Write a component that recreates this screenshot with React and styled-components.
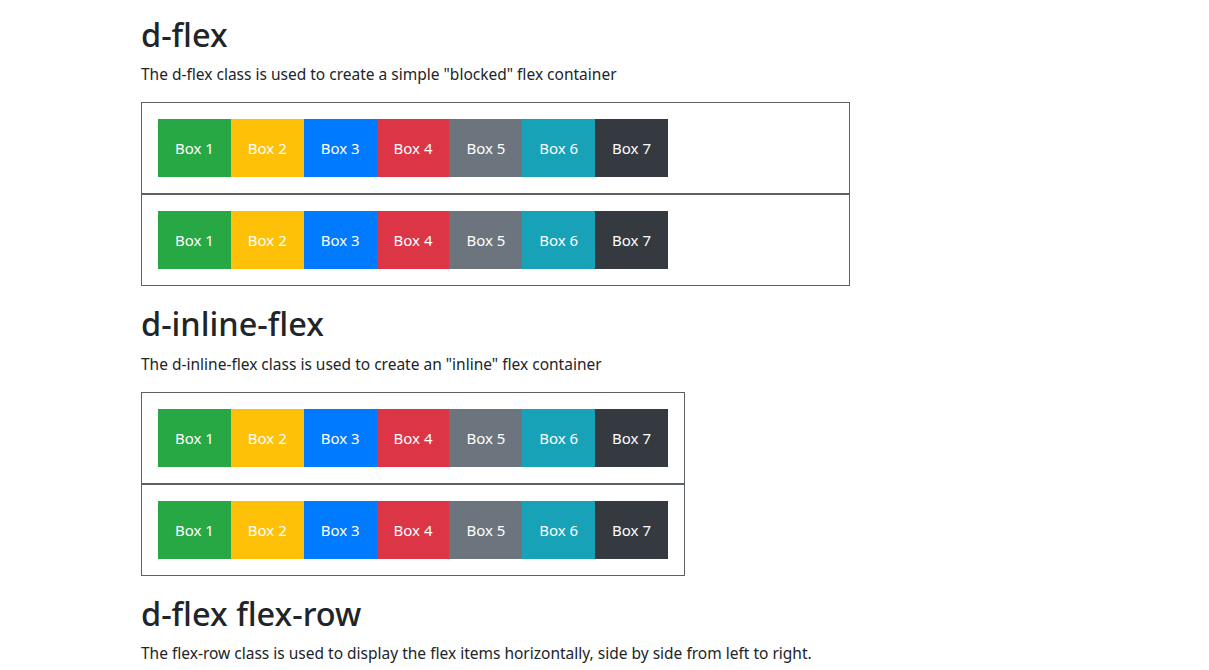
import React from 'react';
import styled, { createGlobalStyle } from 'styled-components';

const GlobalStyle = createGlobalStyle`
  body {
    margin: 0;
    background: #fff;
    color: #212529;
    font-family: "Noto Sans", "Open Sans", Arial, sans-serif;
  }
`;

const colors = ['#28a745', '#ffc107', '#007bff', '#dc3545', '#6c757d', '#17a2b8', '#343a40'];

const Page = styled.div`
  padding: 16px 0 0 141px;
`;

const Section = styled.section`
  & + & {
    margin-top: 19px;
  }
`;

const Title = styled.h2`
  margin: 0 0 8px;
  font-size: 32.5px;
  font-weight: 500;
  line-height: 38.4px;
`;

const Lead = styled.p`
  margin: 0 0 16px;
  font-size: 15.5px;
  line-height: 24px;
`;

const FlexBox = styled.div`
  display: ${props => (props.inline ? 'inline-flex' : 'flex')};
  width: ${props => (props.inline ? 'auto' : '709px')};
  box-sizing: border-box;
  padding: 16px;
  border: 1px solid #5c6166;
`;

const Stack = styled.div`
  display: ${props => (props.inline ? 'inline-block' : 'block')};
  vertical-align: top;
`;

const Item = styled.div`
  width: 72.86px;
  height: 58px;
  display: flex;
  align-items: center;
  justify-content: center;
  background: ${props => props.bg};
  color: #fff;
  font-size: 15px;
`;

const Boxes = ({ inline }) => (
  <FlexBox inline={inline}>
    {colors.map((c, i) => (
      <Item key={i} bg={c}>Box {i + 1}</Item>
    ))}
  </FlexBox>
);

const App = () => (
  <Page>
    <GlobalStyle />
    <Section>
      <Title>d-flex</Title>
      <Lead>The d-flex class is used to create a simple "blocked" flex container</Lead>
      <Stack>
        <Boxes />
        <Boxes />
      </Stack>
    </Section>
    <Section>
      <Title>d-inline-flex</Title>
      <Lead>The d-inline-flex class is used to create an "inline" flex container</Lead>
      <Stack inline>
        <Boxes inline />
        <Boxes inline />
      </Stack>
    </Section>
    <Section>
      <Title>d-flex flex-row</Title>
      <Lead>The flex-row class is used to display the flex items horizontally, side by side from left to right.</Lead>
    </Section>
  </Page>
);

export default App;
